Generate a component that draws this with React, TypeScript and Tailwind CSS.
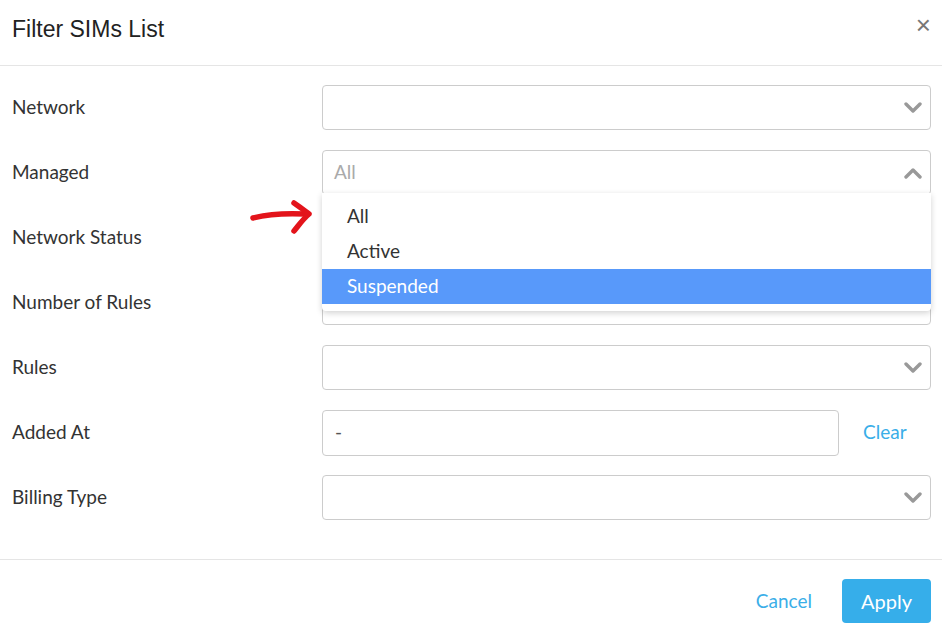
import React from 'react';

const labelFont = { fontFamily: 'Lato, "Open Sans", sans-serif' };

function Chevron({ up = false }: { up?: boolean }) {
  return (
    <svg width="18" height="12" viewBox="0 0 18 12" className="shrink-0">
      <polyline
        points={up ? '2,10 9,3 16,10' : '2,2 9,9 16,2'}
        fill="none"
        stroke="#999"
        strokeWidth="3.4"
        strokeLinecap="round"
        strokeLinejoin="round"
      />
    </svg>
  );
}

function SelectBox({ children, up }: { children?: React.ReactNode; up?: boolean }) {
  return (
    <div className="flex-1 h-[45px] border border-[#ccc] rounded-[4px] bg-white flex items-center pl-[11px] pr-[8px]">
      <div className="flex-1 text-[19px] text-[#aaa]">{children}</div>
      <Chevron up={up} />
    </div>
  );
}

function Row({ label, children }: { label: string; children: React.ReactNode }) {
  return (
    <div className="flex items-center h-[45px]">
      <div className="w-[322px] pl-3 text-[19px] text-[#333]">{label}</div>
      <div className="flex-1 flex items-center pr-[11px] relative">{children}</div>
    </div>
  );
}

export default function App() {
  return (
    <div className="w-[942px] h-[631px] bg-white overflow-hidden relative" style={labelFont}>
      <div className="h-[66px] border-b border-[#e5e5e5] flex items-start justify-between pl-3 pr-[11px] pt-[12px]">
        <h1 className="text-[23px] text-[#222]" style={{ fontFamily: '"Liberation Sans", Arial, sans-serif' }}>
          Filter SIMs List
        </h1>
        <span className="text-[26px] text-[#777] leading-none mt-[0px]" style={{ fontFamily: '"Liberation Sans", Arial, sans-serif' }}>
          ×
        </span>
      </div>

      <div className="flex flex-col gap-5 pt-[19px] pb-[39px] border-b border-[#e5e5e5]">
        <Row label="Network">
          <SelectBox />
        </Row>
        <Row label="Managed">
          <SelectBox up>All</SelectBox>
          <div className="absolute left-0 right-[11px] top-[43px] z-10 bg-white rounded-b-[4px] shadow-[0_2px_6px_rgba(0,0,0,0.18)] pt-[6px] pb-[7px] text-[19px] text-[#333]">
            <div className="h-[35px] flex items-center pl-[25px]">All</div>
            <div className="h-[35px] flex items-center pl-[25px]">Active</div>
            <div className="h-[35px] flex items-center pl-[25px] bg-[#5899fa] text-white">Suspended</div>
          </div>
        </Row>
        <Row label="Network Status">
          <SelectBox />
        </Row>
        <Row label="Number of Rules">
          <SelectBox />
        </Row>
        <Row label="Rules">
          <SelectBox />
        </Row>
        <Row label="Added At">
          <div className="flex-1 h-[46px] border border-[#ccc] rounded-[4px] flex items-center pl-[12px] text-[19px] text-[#555]">
            -
          </div>
          <span className="w-[92px] pl-6 text-[19px] text-[#3aaee8]">Clear</span>
        </Row>
        <Row label="Billing Type">
          <SelectBox />
        </Row>
      </div>

      <div className="flex items-center justify-end gap-[30px] pr-[11px] pt-[19px]">
        <span className="text-[19px] text-[#3aaee8]">Cancel</span>
        <button className="w-[89px] h-[44px] rounded-[4px] bg-[#36aeea] text-white text-[20px]">Apply</button>
      </div>

      <svg className="absolute left-[248px] top-[198px]" width="68" height="38" viewBox="0 0 68 38">
        <path d="M5 20 C 20 16, 38 15, 58 16" fill="none" stroke="#e3141b" strokeWidth="5.5" strokeLinecap="round" />
        <path d="M46 5 C 52 9, 57 13, 61 16 C 55 21, 51 27, 46 33" fill="none" stroke="#e3141b" strokeWidth="5.5" strokeLinecap="round" strokeLinejoin="round" />
      </svg>
    </div>
  );
}
